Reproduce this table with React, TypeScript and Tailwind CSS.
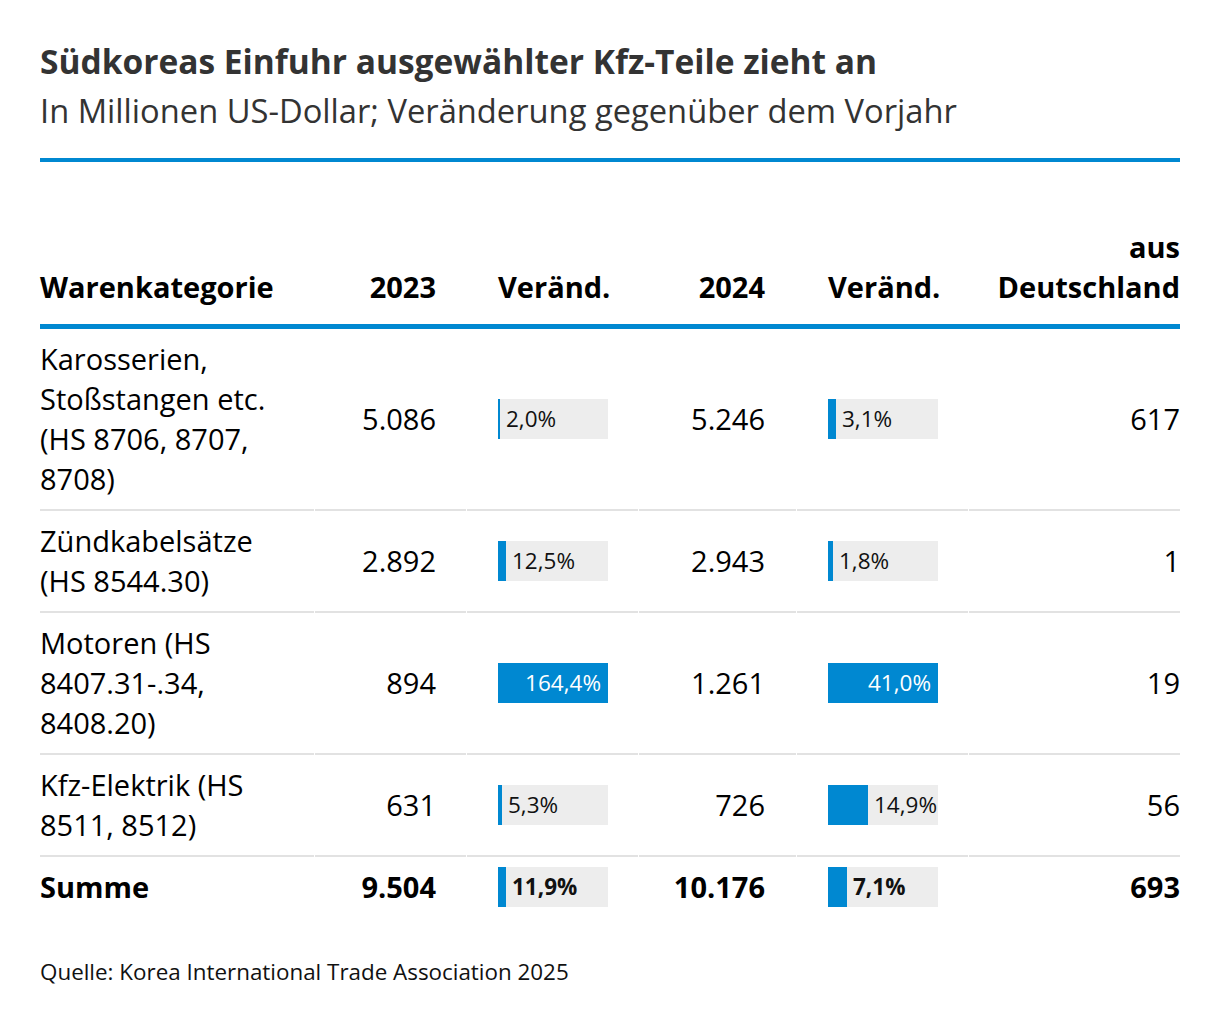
import React from "react";

type Row = {
  label: React.ReactNode;
  v23: string;
  c23: number;
  v24: string;
  c24: number;
  de: string;
};

const rows: Row[] = [
  {
    label: (
      <>
        Karosserien,
        <br />
        Stoßstangen etc.
        <br />
        (HS 8706, 8707,
        <br />
        8708)
      </>
    ),
    v23: "5.086",
    c23: 2.0,
    v24: "5.246",
    c24: 3.1,
    de: "617",
  },
  {
    label: (
      <>
        Zündkabelsätze
        <br />
        (HS 8544.30)
      </>
    ),
    v23: "2.892",
    c23: 12.5,
    v24: "2.943",
    c24: 1.8,
    de: "1",
  },
  {
    label: (
      <>
        Motoren (HS
        <br />
        8407.31-.34,
        <br />
        8408.20)
      </>
    ),
    v23: "894",
    c23: 164.4,
    v24: "1.261",
    c24: 41.0,
    de: "19",
  },
  {
    label: (
      <>
        Kfz-Elektrik (HS
        <br />
        8511, 8512)
      </>
    ),
    v23: "631",
    c23: 5.3,
    v24: "726",
    c24: 14.9,
    de: "56",
  },
];

const MAX23 = 164.4;
const MAX24 = 41.0;

function fmt(n: number) {
  return n.toFixed(1).replace(".", ",") + "%";
}

function Bar({ value, max, bold }: { value: number; max: number; bold?: boolean }) {
  const w = (value / max) * 110;
  const full = w >= 109.5;
  const weight = bold ? "font-bold" : "font-normal";
  if (full) {
    return (
      <div
        className={`relative flex h-[40px] w-[110px] items-center justify-end bg-[#0088d1] pr-[7px] text-[22.5px] leading-[40px] text-white ${weight}`}
      >
        {fmt(value)}
      </div>
    );
  }
  return (
    <div className="relative flex h-[40px] w-[110px] items-center bg-[#ededed]">
      <div className="h-[40px] shrink-0 bg-[#0088d1]" style={{ width: Math.max(2, Math.round(w)) }} />
      <span className={`ml-[6px] whitespace-nowrap text-[22.5px] leading-[40px] text-[#111] ${weight}`}>
        {fmt(value)}
      </span>
    </div>
  );
}

const GRID = "grid grid-cols-[274px_151px_171px_157px_171px_211px] gap-x-px";

export default function App() {
  return (
    <div
      className="min-h-[1030px] w-[1220px] bg-white px-[40px] pt-[39px] text-black"
      style={{ fontFamily: "'Open Sans', 'Noto Sans', sans-serif" }}
    >
      <h1 className="text-[33.5px] font-bold leading-[44px] text-[#333333]">
        Südkoreas Einfuhr ausgewählter Kfz-Teile zieht an
      </h1>
      <p className="mt-[5px] text-[32.7px] font-normal leading-[46px] text-[#333333]">
        In Millionen US-Dollar; Veränderung gegenüber dem Vorjahr
      </p>
      <div className="mt-[24px] h-[4px] bg-[#0088d1]" />

      {/* header */}
      <div className={`${GRID} mt-[65px] items-end border-b-[5px] border-[#0088d1] pb-[17px] text-[29px] font-bold leading-[40px]`}>
        <div>Warenkategorie</div>
        <div className="pr-[30px] text-right">2023</div>
        <div className="pl-[31px]">Veränd.</div>
        <div className="pr-[31px] text-right">2024</div>
        <div className="pl-[31px]">Veränd.</div>
        <div className="text-right">
          aus
          <br />
          Deutschland
        </div>
      </div>

      {/* body */}
      <div className={`${GRID} text-[29px] leading-[40px]`}>
        {rows.map((r, i) => (
          <React.Fragment key={i}>
            <div className="border-b-2 border-[#e2e2e2] py-[10px]">{r.label}</div>
            <div className="flex items-center justify-end border-b-2 border-[#e2e2e2] py-[10px] pr-[30px]">{r.v23}</div>
            <div className="flex items-center border-b-2 border-[#e2e2e2] py-[10px] pl-[31px]">
              <Bar value={r.c23} max={MAX23} />
            </div>
            <div className="flex items-center justify-end border-b-2 border-[#e2e2e2] py-[10px] pr-[31px]">{r.v24}</div>
            <div className="flex items-center border-b-2 border-[#e2e2e2] py-[10px] pl-[31px]">
              <Bar value={r.c24} max={MAX24} />
            </div>
            <div className="flex items-center justify-end border-b-2 border-[#e2e2e2] py-[10px]">{r.de}</div>
          </React.Fragment>
        ))}
        {/* Summe */}
        <div className="py-[10px] font-bold">Summe</div>
        <div className="flex items-center justify-end py-[10px] pr-[30px] font-bold">9.504</div>
        <div className="flex items-center py-[10px] pl-[31px]">
          <Bar value={11.9} max={MAX23} bold />
        </div>
        <div className="flex items-center justify-end py-[10px] pr-[31px] font-bold">10.176</div>
        <div className="flex items-center py-[10px] pl-[31px]">
          <Bar value={7.1} max={MAX24} bold />
        </div>
        <div className="flex items-center justify-end py-[10px] font-bold">693</div>
      </div>

      <p className="mt-[40px] text-[22.4px] leading-[30px] text-[#111]">
        Quelle: Korea International Trade Association 2025
      </p>
    </div>
  );
}
